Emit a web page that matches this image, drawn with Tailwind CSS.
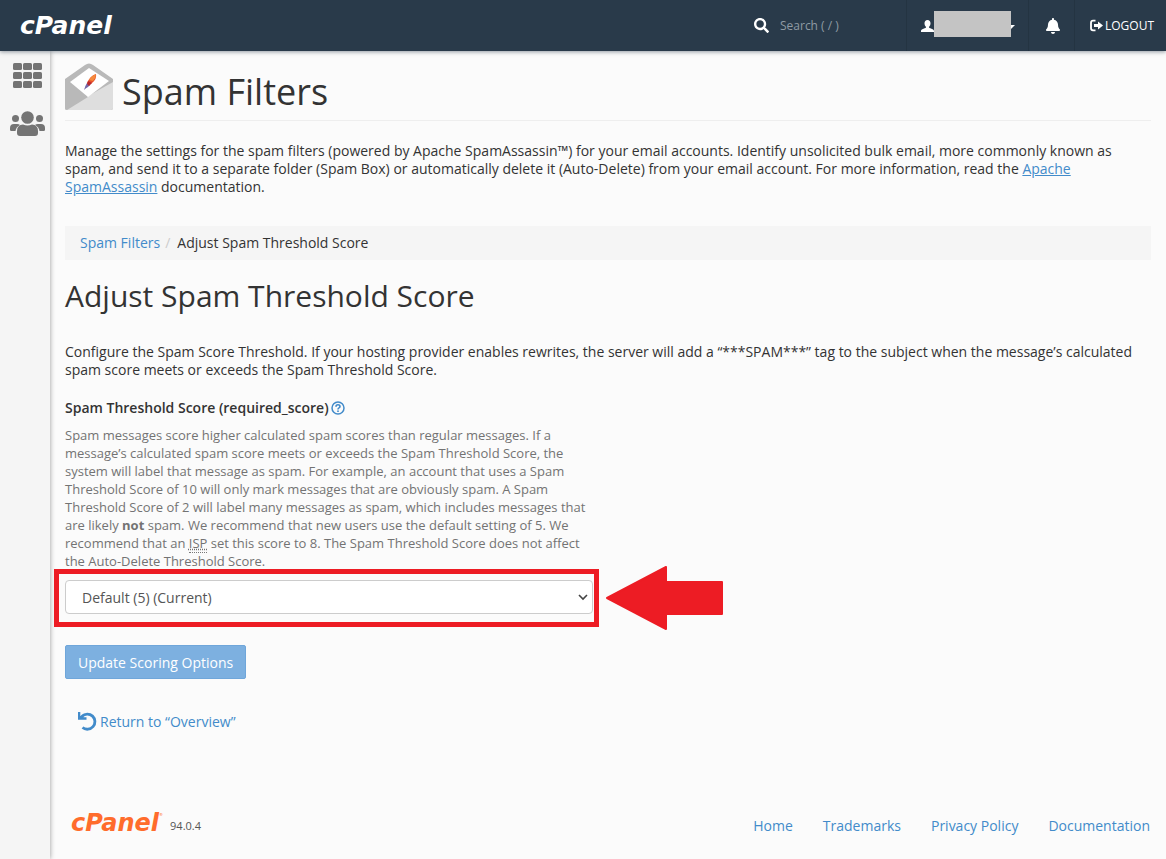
<!DOCTYPE html>
<html lang="en">
<head>
<meta charset="UTF-8">
<meta name="viewport" content="width=device-width, initial-scale=1.0">
<title>cPanel - Spam Filters</title>
<script src="https://cdn.jsdelivr.net/npm/@tailwindcss/browser@4"></script>
</head>
<body class="flex min-h-screen flex-col bg-[#fbfbfb] font-['Open_Sans',sans-serif] text-sm leading-[18px] text-[#333]">

<!-- Top bar -->
<header class="relative z-10 flex h-[51px] items-stretch bg-[#293a4a] text-xs text-white shadow-[0_1px_4px_rgba(41,58,74,0.5)]">
  <a href="#" class="flex items-center pt-px pl-5 font-['DejaVu_Sans',sans-serif] text-[25px] font-bold italic">cPanel</a>
  <div class="ml-auto flex items-center gap-[11px]">
    <label for="search" aria-label="Search">
      <svg class="size-[15px]" viewBox="0 0 512 512" fill="currentColor"><path d="M505 442.7L405.3 343c-4.5-4.5-10.6-7-17-7H372c27.6-35.3 44-79.7 44-128C416 93.1 322.9 0 208 0S0 93.1 0 208s93.1 208 208 208c48.3 0 92.7-16.4 128-44v16.3c0 6.4 2.5 12.5 7 17l99.7 99.7c9.4 9.4 24.6 9.4 33.9 0l28.3-28.3c9.4-9.4 9.4-24.6.1-34zM208 336c-70.7 0-128-57.2-128-128 0-70.7 57.2-128 128-128 70.7 0 128 57.2 128 128 0 70.7-57.2 128-128 128z"/></svg>
    </label>
    <input id="search" type="text" placeholder="Search ( / )" class="w-[126px] bg-transparent outline-none placeholder:text-[#8f9aa4]">
  </div>
  <button type="button" class="flex w-[122px] items-center border-l border-[#243442] pl-[14px]" aria-label="Account">
    <svg class="h-3 w-[13px]" viewBox="0 0 13 12" fill="currentColor"><path d="M6.500 0C8.400 0 9.500 1.300 9.500 3.300 9.500 4.800 9 6 8.100 6.700v1c1 .8 4.900 1.300 4.900 3.300v1H0v-1C0 9 3.900 8.500 4.900 7.700v-1C4 6 3.500 4.800 3.500 3.300 3.500 1.300 4.600 0 6.500 0z"/></svg>
    <span class="-mt-[3px] h-[26px] w-[77px] bg-[#c4c4c4]"></span>
    <svg class="mt-[3px] h-1 w-1" viewBox="0 0 4 4" fill="currentColor"><path d="M0 0h4L0 4z"/></svg>
  </button>
  <button type="button" class="flex w-[46px] items-center justify-center border-l border-[#243442] pl-[3px]" aria-label="Notifications">
    <svg class="h-4 w-[14px]" viewBox="0 0 448 512" fill="currentColor"><path d="M224 512c35.32 0 63.97-28.65 63.97-64H160.03c0 35.35 28.65 64 63.97 64zm215.39-149.71c-19.32-20.76-55.47-51.99-55.47-154.29 0-77.7-54.48-139.9-127.94-155.16V32c0-17.67-14.32-32-31.98-32s-31.98 14.33-31.98 32v20.84C118.56 68.1 64.08 130.3 64.08 208c0 102.3-36.15 133.53-55.47 154.29-6 6.45-8.66 14.16-8.61 21.71.11 16.4 12.98 32 32.1 32h383.8c19.12 0 32-15.6 32.1-32 .05-7.55-2.61-15.27-8.61-21.71z"/></svg>
  </button>
  <a href="#" class="flex items-center gap-[2px] border-l border-[#243442] pr-3 pl-[15px]">
    <svg class="size-[13px]" viewBox="0 0 13 13" fill="currentColor"><path d="M5.500 1.700H3Q1 1.700 1 3.700v5.600q0 2 2 2h2.500" fill="none" stroke="currentColor" stroke-width="1.800"/><path d="M4 5h4V2.500l5 4-5 4V8H4z"/></svg>
    <span>LOGOUT</span>
  </a>
</header>

<div class="flex flex-1">
  <!-- Sidebar -->
  <nav class="flex w-[50px] shrink-0 flex-col items-center gap-[23px] bg-[#f5f5f5] pt-3 pl-1 text-[#747474] shadow-[0_0_5px_rgba(0,0,0,0.4)]">
    <a href="#" aria-label="Tools">
      <svg class="h-[25px] w-[29px]" viewBox="0 0 29 25" fill="currentColor">
        <rect x="0" y="0" width="9" height="7" rx="1.500"/><rect x="10" y="0" width="9" height="7" rx="1.500"/><rect x="20" y="0" width="9" height="7" rx="1.500"/>
        <rect x="0" y="9" width="9" height="7" rx="1.500"/><rect x="10" y="9" width="9" height="7" rx="1.500"/><rect x="20" y="9" width="9" height="7" rx="1.500"/>
        <rect x="0" y="18" width="9" height="7" rx="1.500"/><rect x="10" y="18" width="9" height="7" rx="1.500"/><rect x="20" y="18" width="9" height="7" rx="1.500"/>
      </svg>
    </a>
    <a href="#" aria-label="User manager">
      <svg class="h-[26px] w-[35px]" viewBox="0 0 35 26" fill="currentColor">
        <circle cx="17.500" cy="6.500" r="6.300"/><circle cx="5.500" cy="7.500" r="3.500"/><circle cx="29.500" cy="7.500" r="3.500"/>
        <path d="M7 22v-2q0-6 6-6.500 4.500 2 9 0 6 .5 6 6.500v2q0 3-3 3H10q-3 0-3-3z"/>
        <path d="M0 19v-2q0-4 4-4h3q2 0 3 1-4 2-4.500 6H1.500Q0 20 0 19zM35 19v-2q0-4-4-4h-3q-2 0-3 1 4 2 4.500 6h4q1.500 0 1.500-1z"/>
      </svg>
    </a>
  </nav>

  <div class="flex min-w-0 flex-1 flex-col px-[15px]">
    <main>
      <h1 class="flex h-[70px] items-center gap-[9px] border-b border-[#eee] pt-3 text-[36px]">
        <svg class="-mt-[9px] h-12 w-12" viewBox="0 0 48 48">
          <path d="M0 16L20 2q4-3 8 0l20 14v29q0 2-2 2H2q-2 0-2-2z" fill="#b9b9b9"/>
          <path d="M48 19v26q0 2-2 2H2q-1 0-2-1z" fill="#dedede"/>
          <path d="M0 16l23 18L2 47q-2 0-2-2z" fill="#b9b9b9"/>
          <path d="M5 19L24 5l20 13-21 16z" fill="#fff"/>
          <path d="M31 11q1 5-4 9l-4 3-1-3q3-7 9-9z" fill="#e8502c"/>
          <path d="M31 11q-5 2-7 6l4 1q3-3 3-7z" fill="#f58a3c"/>
          <path d="M22 20l3 2-2 2q-2 1-4 3 1-4 3-7z" fill="#7467a8"/>
          <path d="M23 18l4 2-3 3-2-2z" fill="#b8292f"/>
        </svg>
        <span>Spam Filters</span>
      </h1>

      <p class="mt-[21px]">Manage the settings for the spam filters (powered by Apache SpamAssassin™) for your email accounts. Identify unsolicited bulk email, more commonly known as spam, and send it to a separate folder (Spam Box) or automatically delete it (Auto-Delete) from your email account. For more information, read the <a href="#" class="text-[#428bca] underline">Apache SpamAssassin</a> documentation.</p>

      <nav class="mt-[30px] flex bg-[#f5f5f5] px-[15px] py-2" aria-label="Breadcrumb">
        <a href="#" class="text-[#428bca]">Spam Filters</a>
        <span class="pr-[7px] pl-[5px] text-[#ccc]">/</span>
        <span>Adjust Spam Threshold Score</span>
      </nav>

      <h2 class="mt-[18px] text-[30px] leading-9">Adjust Spam Threshold Score</h2>

      <p class="mt-[29px]">Configure the Spam Score Threshold. If your hosting provider enables rewrites, the server will add a “***SPAM***” tag to the subject when the message’s calculated spam score meets or exceeds the Spam Threshold Score.</p>

      <form class="mt-5">
        <div class="flex items-center gap-[2px]">
          <label for="score" class="font-semibold">Spam Threshold Score (required_score)</label>
          <button type="button" aria-label="Help" class="text-[#428bca]">
            <svg class="size-[14px]" viewBox="0 0 14 14" fill="none" stroke="currentColor"><circle cx="7" cy="7" r="6" stroke-width="1.500"/><path d="M5 5.700Q5 3.800 7 3.800t2 1.700Q9 6.400 8 6.900T7 8.400" stroke-width="1.600"/><circle cx="7" cy="10.200" r=".9" fill="currentColor" stroke="none"/></svg>
          </button>
        </div>
        <p class="mt-[9px] max-w-[528px] text-[13px] text-[#737373]">Spam messages score higher calculated spam scores than regular messages. If a message’s calculated spam score meets or exceeds the Spam Threshold Score, the system will label that message as spam. For example, an account that uses a Spam Threshold Score of 10 will only mark messages that are obviously spam. A Spam Threshold Score of 2 will label many messages as spam, which includes messages that are likely <strong class="font-bold">not</strong> spam. We recommend that new users use the default setting of 5. We recommend that an <abbr title="Internet Service Provider" class="border-b border-dotted border-[#777] underline decoration-dotted">ISP</abbr> set this score to 8. The Spam Threshold Score does not affect the Auto-Delete Threshold Score.</p>

        <div class="relative mt-[10px] max-w-[528px]">
          <select id="score" class="block h-[34px] w-full appearance-none rounded border border-[#ccc] bg-white px-4 pt-px text-[#555]">
            <option>Default (5) (Current)</option>
          </select>
          <svg class="pointer-events-none absolute top-[14px] right-[5px] h-[7px] w-[10px]" viewBox="0 0 10 7" fill="none" stroke="#444" stroke-width="1.600"><path d="M1 1l4 4 4-4"/></svg>
          <!-- highlight frame and arrow over the select -->
          <div class="pointer-events-none absolute -top-[11px] -right-[6px] -bottom-[13px] -left-[11px] border-[5px] border-[#ed1c24]"></div>
          <svg class="pointer-events-none absolute -top-[14px] left-full ml-[13px] h-16 w-[117px]" viewBox="0 0 117 64" fill="#ed1c24" stroke="#ed1c24" stroke-width="2" stroke-linejoin="round"><path d="M1 32L60 1v15h56v32H60v15z"/></svg>
        </div>

        <button type="submit" class="mt-[31px] block h-[34px] rounded-[2px] border border-[#6fa6da] bg-[#7db0e0] px-3 pt-px text-white">Update Scoring Options</button>
      </form>

      <a href="#" class="mt-[34px] ml-[13px] inline-flex items-center gap-[3px] text-[#428bca]">
        <svg class="-mt-[2px] size-[19px]" viewBox="0 0 19 19" fill="none" stroke="currentColor"><path d="M4 4.200A7.600 7.600 0 1 1 4.500 15.500" stroke-width="2.800"/><path d="M0 0h2.300v4L5 2.500l.5 2.800H8.500v2.500H0z" fill="currentColor" stroke="none"/></svg>
        <span>Return to “Overview”</span>
      </a>
    </main>

    <footer class="mt-auto flex items-center justify-between pb-6">
      <div class="flex items-center gap-[7px] pl-[6px]">
        <a href="#" class="-mt-[6px] flex font-['DejaVu_Sans',sans-serif] text-[24px] font-bold text-[#ff6c2c] italic">cPanel<sup class="text-[4px] leading-[6px] font-normal not-italic">®</sup></a>
        <span class="text-[11px] text-[#555]">94.0.4</span>
      </div>
      <nav class="flex gap-[30px] pr-px text-[#428bca]">
        <a href="#">Home</a>
        <a href="#">Trademarks</a>
        <a href="#">Privacy Policy</a>
        <a href="#">Documentation</a>
      </nav>
    </footer>
  </div>
</div>

</body>
</html>
